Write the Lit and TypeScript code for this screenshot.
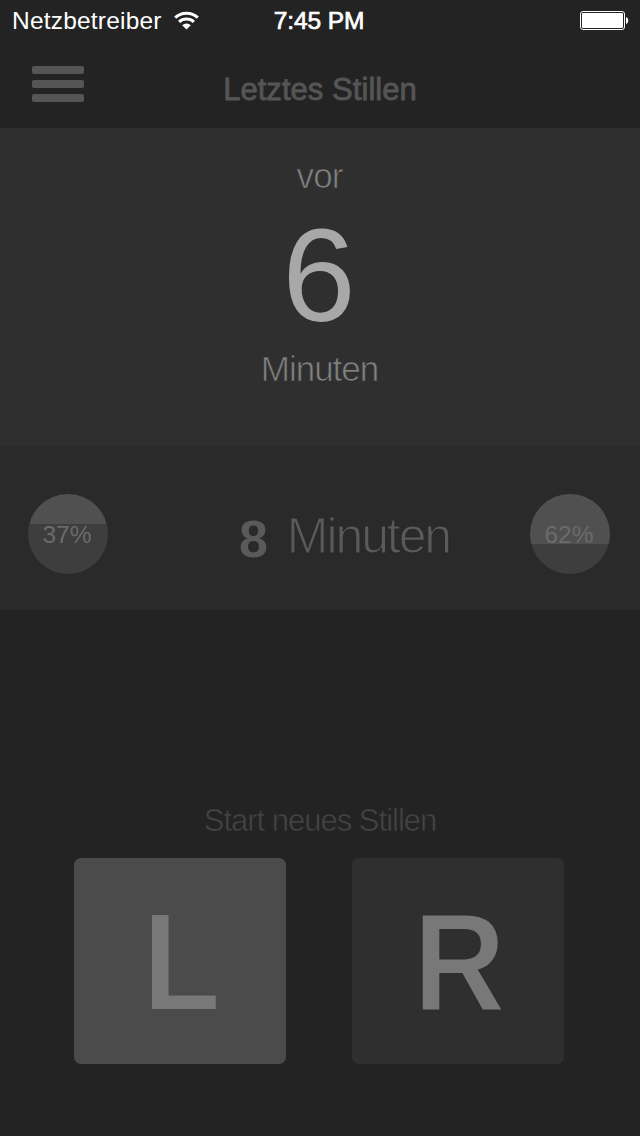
import { LitElement, html, css, svg } from "lit";
import { customElement, property } from "lit/decorators.js";

/** Round gauge that is filled from the top down to the given share. */
@customElement("side-share")
class SideShare extends LitElement {
  @property({ type: Number }) fill = 0;
  @property() label = "";

  static styles = css`
    :host { display: block; }
    .disc {
      width: 80px;
      height: 80px;
      border-radius: 50%;
      color: #6b6b6b;
      font-size: 24.5px;
      line-height: 81px;
      text-align: center;
      text-indent: -2px;
      white-space: nowrap;
    }
  `;

  render() {
    return html`<div
      class="disc"
      style="background: linear-gradient(#505050 ${this.fill}px, #3e3e3e ${this.fill}px)"
    >${this.label}</div>`;
  }
}

const wifi = svg`
  <path d="M1.2 6.7 A16.6 16.6 0 0 1 23.8 6.7" />
  <path d="M5.1 10.9 A11 11 0 0 1 19.9 10.9" />
  <path class="solid" d="M12.5 18.6 L8.2 14.2 A6.4 6.4 0 0 1 16.8 14.2 Z" />
`;

@customElement("app-root")
class AppRoot extends LitElement {
  static styles = css`
    :host {
      display: block;
      font-family: "Liberation Sans", Arial, sans-serif;
    }
    .screen {
      display: flex;
      flex-direction: column;
      box-sizing: border-box;
      width: 640px;
      height: 1136px;
      overflow: hidden;
      background: #232323;
      white-space: nowrap;
    }
    .status {
      display: grid;
      grid-template-columns: 1fr auto 1fr;
      align-items: center;
      height: 41px;
      padding: 0 11px 0 12px;
      color: #fff;
      font-size: 24.5px;
      line-height: 41px;
    }
    .carrier { display: flex; align-items: center; gap: 12px; letter-spacing: 0.2px; }
    .wifi { fill: none; stroke: #fff; stroke-width: 3.1; }
    .solid { fill: #fff; stroke: none; }
    .clock {
      padding-right: 3px;
      -webkit-text-stroke: 0.7px #fff;
      letter-spacing: -0.1px;
    }
    .battery { justify-self: end; }
    .nav {
      display: grid;
      grid-template-columns: 1fr auto 1fr;
      align-items: center;
      height: 87px;
      padding: 0 32px;
    }
    .menu { display: flex; flex-direction: column; gap: 6px; width: 52px; padding-bottom: 1px; }
    .bar { height: 8px; border-radius: 2px; background: #555; }
    .title {
      padding-top: 11px;
      color: #555;
      font-size: 31px;
      line-height: 40px;
      -webkit-text-stroke: 0.8px #555;
      letter-spacing: 0.05px;
    }
    .last {
      display: flex;
      flex-direction: column;
      align-items: center;
      box-sizing: border-box;
      height: 318px;
      padding-top: 28px;
      background: #2f2f2f;
      font-size: 35px;
    }
    .thin { -webkit-text-stroke: 0.7px #2f2f2f; }
    .vor { line-height: 40px; color: #808080; letter-spacing: -0.9px; padding-right: 1px; }
    .count { color: #a8a8a8; font-size: 132px; line-height: 159px; padding-right: 2px; }
    .unit { line-height: 28px; color: #808080; letter-spacing: -1px; padding-right: 1px; }
    .length {
      display: flex;
      justify-content: space-between;
      align-items: center;
      box-sizing: border-box;
      height: 164px;
      padding: 12px 30px 0 28px;
      background: #2a2a2a;
    }
    .duration { display: flex; align-items: flex-start; padding-left: 51px; color: #5a5a5a; }
    .eight { padding-top: 10px; font-size: 52px; font-weight: bold; line-height: 60px; }
    .minutes {
      padding: 7px 0 3px 19px;
      font-size: 50px;
      line-height: 60px;
      letter-spacing: -2.1px;
      -webkit-text-stroke: 1.2px #2a2a2a;
    }
    .start {
      padding-top: 191px;
      text-align: center;
      color: #454545;
      font-size: 31px;
      line-height: 40px;
      letter-spacing: -1px;
      -webkit-text-stroke: 0.6px #232323;
    }
    .sides { display: flex; gap: 66px; padding: 17px 76px 0 74px; }
    .side {
      box-sizing: border-box;
      width: 212px;
      height: 206px;
      padding: 0 0 0 3px;
      border: 0;
      border-radius: 7px;
      background: #2f2f2f;
      color: #787878;
      font: bold 139px/208px "Liberation Sans", Arial, sans-serif;
      text-align: center;
      -webkit-text-stroke: 2px #2f2f2f;
    }
    .next { background: #4b4b4b; -webkit-text-stroke-color: #4b4b4b; }
    .letter { display: block; transform: scaleX(0.92); }
  `;

  render() {
    return html`
      <div class="screen">
        <div class="status">
          <div class="carrier">
            <span>Netzbetreiber</span>
            <svg class="wifi" width="25" height="20" viewBox="0 0 25 20">${wifi}</svg>
          </div>
          <div class="clock">7:45 PM</div>
          <svg class="battery" width="49" height="20" viewBox="0 0 49 20">
            <rect x="0.5" y="0.5" width="44" height="18" rx="2.5" fill="none" stroke="#fff" />
            <rect x="2" y="2" width="41" height="15" rx="1" fill="#fff" />
            <path d="M46 6 A3 3.6 0 0 1 46 13 Z" fill="#fff" />
          </svg>
        </div>
        <div class="nav">
          <div class="menu">
            <div class="bar"></div>
            <div class="bar"></div>
            <div class="bar"></div>
          </div>
          <div class="title">Letztes Stillen</div>
        </div>
        <div class="last">
          <div class="vor thin">vor</div>
          <div class="count">6</div>
          <div class="unit thin">Minuten</div>
        </div>
        <div class="length">
          <side-share .fill=${30} .label=${"37%"}></side-share>
          <div class="duration">
            <span class="eight">8</span>
            <span class="minutes">Minuten</span>
          </div>
          <side-share .fill=${50} .label=${"62%"}></side-share>
        </div>
        <div class="start">Start neues Stillen</div>
        <div class="sides">
          <button class="side next"><span class="letter">L</span></button>
          <button class="side"><span class="letter">R</span></button>
        </div>
      </div>
    `;
  }
}
